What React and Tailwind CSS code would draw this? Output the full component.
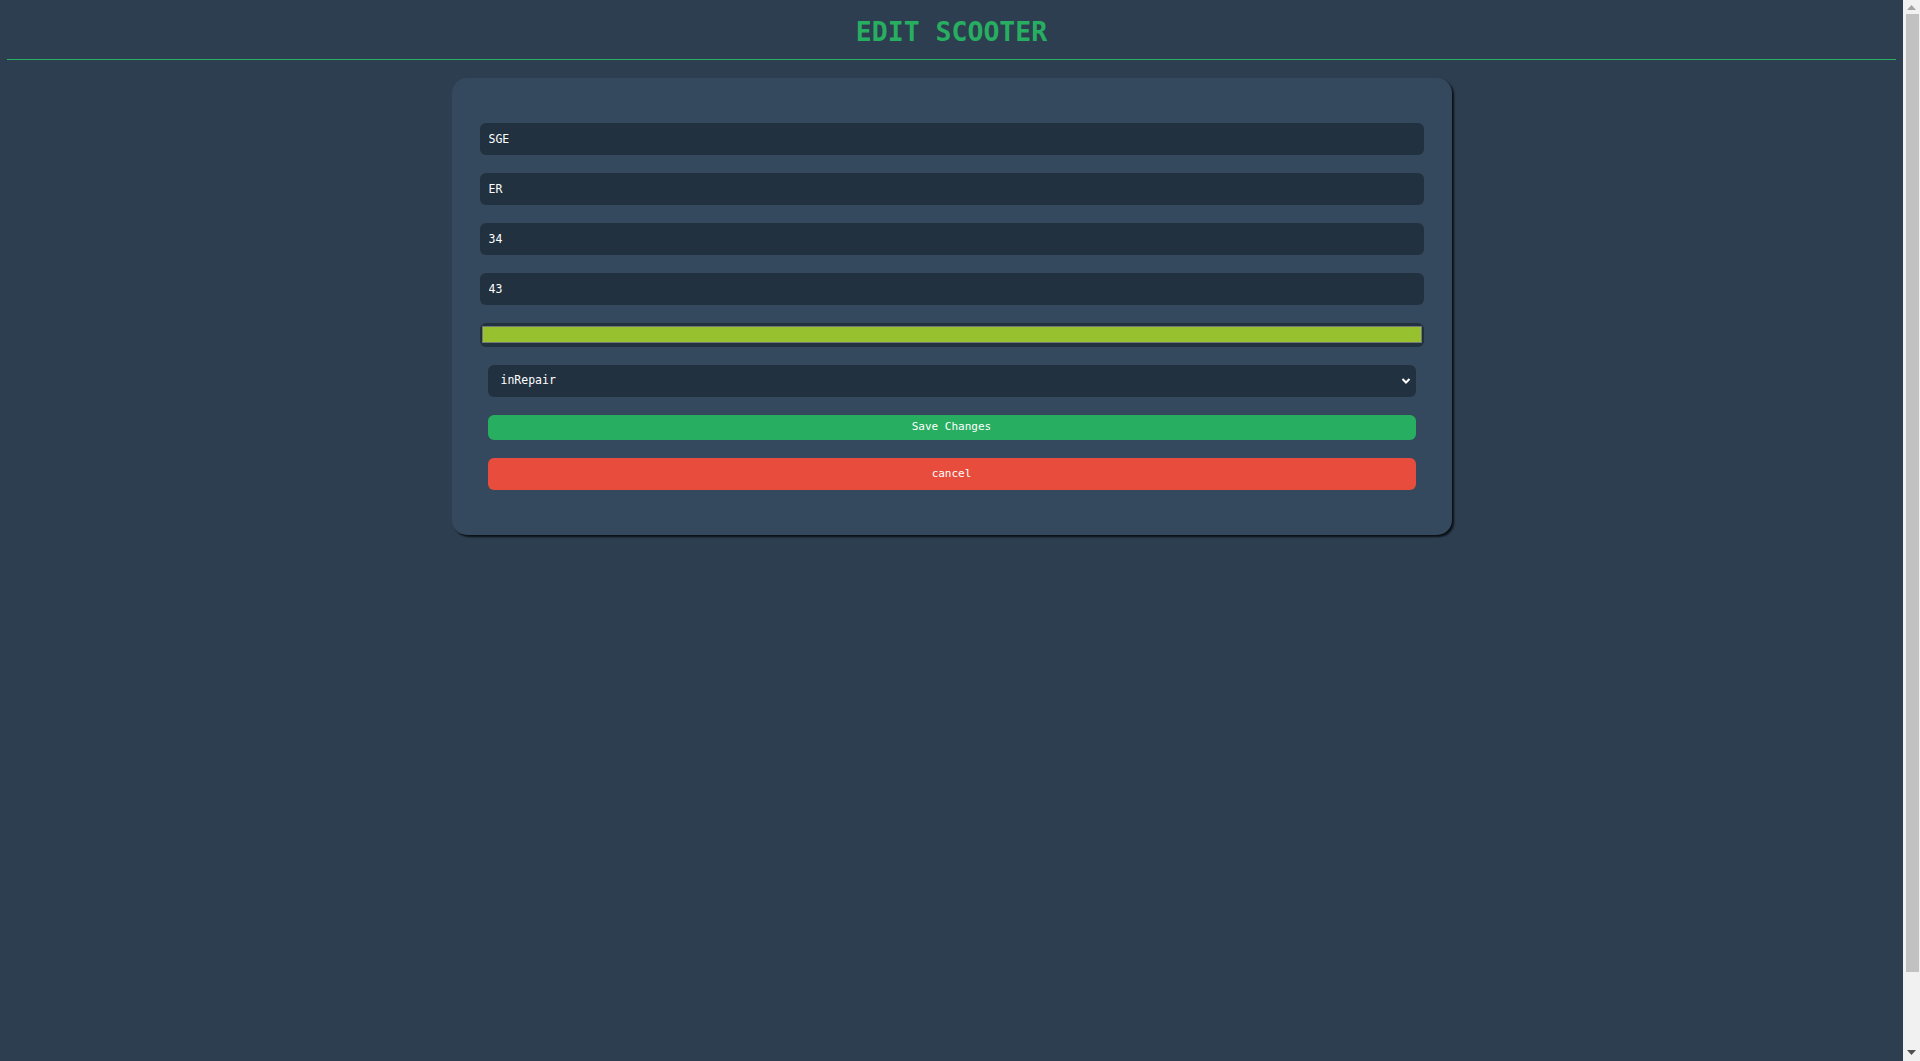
import React from "react";

const mono = { fontFamily: '"DejaVu Sans Mono", "Liberation Mono", monospace' };

function Field({ value }) {
  return (
    <input
      readOnly
      value={value}
      className="block w-full h-[32px] rounded-md bg-[#22313f] px-[9px] text-[11.5px] text-white outline-none border-0"
      style={mono}
    />
  );
}

function FakeScrollbar() {
  return (
    <div className="fixed right-0 top-0 h-screen w-[17px] bg-[#f1f1f1] flex flex-col items-center">
      <div className="h-[14px] w-full flex items-center justify-center">
        <svg width="9" height="5" viewBox="0 0 9 5">
          <polygon points="0,5 9,5 4.5,0" fill="#a3a3a3" />
        </svg>
      </div>
      <div className="w-[13px] h-[958px] bg-[#c1c1c1] ml-[1px]" />
      <div className="flex-1" />
      <div className="h-[17px] w-full flex items-center justify-center">
        <svg width="9" height="5" viewBox="0 0 9 5">
          <polygon points="0,0 9,0 4.5,5" fill="#505050" />
        </svg>
      </div>
    </div>
  );
}

export default function App() {
  return (
    <div className="min-h-[1144px] bg-[#2c3e50] pr-[17px]" style={mono}>
      <div className="px-[7px]">
        <header className="h-[59px] flex items-center justify-center pt-[4px]">
          <h1 className="text-[26.5px] font-bold text-[#27ae60] tracking-normal">EDIT SCOOTER</h1>
        </header>
        <div className="h-px bg-[#27ae60]" />
        <main className="pt-[18px] flex justify-center">
          <div className="w-[1000px] rounded-[15px] bg-[#34495e] px-[28px] pt-[45px] pb-[45px] shadow-[2px_2px_2px_rgba(0,0,0,0.75)]">
            <div className="flex flex-col gap-[18px]">
              <Field value="SGE" />
              <Field value="ER" />
              <Field value="34" />
              <Field value="43" />
              <div className="h-[24px] rounded-md bg-[#22313f] pl-[2px] pr-[2px] pt-[3px] pb-[4px]">
                <div className="h-full border border-[#777777] bg-[#97c12e]" />
              </div>
              <div className="relative mx-[8px]">
                <select
                  defaultValue="inRepair"
                  className="block w-full h-[32px] appearance-none rounded-md bg-[#22313f] pl-[13px] text-[11.5px] text-white outline-none border-0"
                  style={mono}
                >
                  <option value="available">available</option>
                  <option value="inUse">inUse</option>
                  <option value="inRepair">inRepair</option>
                </select>
                <svg
                  className="pointer-events-none absolute right-[5px] top-[12px]"
                  width="10"
                  height="8"
                  viewBox="0 0 10 8"
                >
                  <polyline points="1.5,2 5,5.5 8.5,2" fill="none" stroke="white" strokeWidth="2" />
                </svg>
              </div>
              <button
                className="mx-[8px] h-[25px] rounded-md bg-[#27ae60] text-[11px] text-white"
                style={mono}
              >
                Save Changes
              </button>
              <button
                className="mx-[8px] h-[32px] rounded-md bg-[#e74c3c] text-[11px] text-white"
                style={mono}
              >
                cancel
              </button>
            </div>
          </div>
        </main>
      </div>
      <FakeScrollbar />
    </div>
  );
}
